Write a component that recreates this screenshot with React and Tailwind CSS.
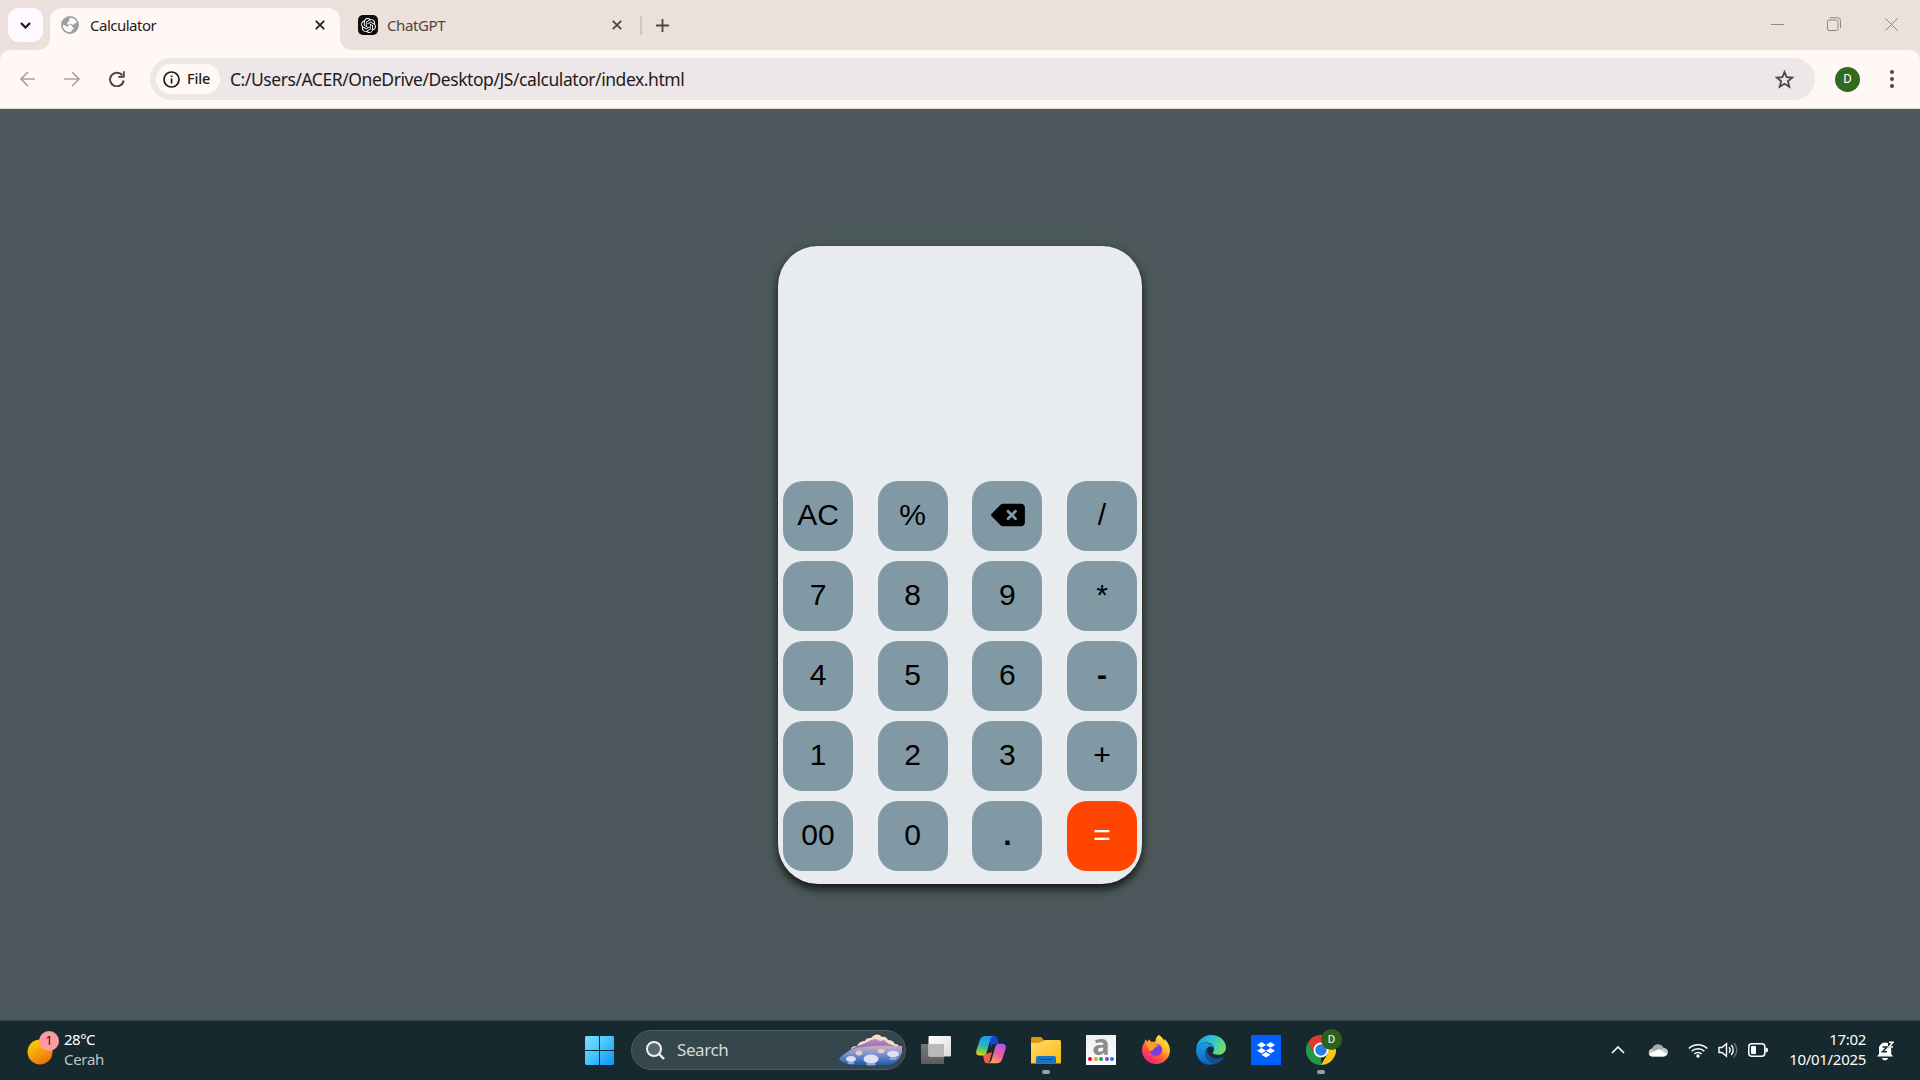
import React from "react";
import { FaDeleteLeft } from "react-icons/fa6";
import { SiOpenai } from "react-icons/si";

const KEYS = ["AC", "%", "DEL", "/", "7", "8", "9", "*", "4", "5", "6", "-", "1", "2", "3", "+", "00", "0", ".", "="];

function Globe() {
  return (
    <svg className="h-[18px] w-[18px]" viewBox="0 0 18 18">
      <circle cx="9" cy="9" r="9" fill="#9aa0a6" />
      <path d="M9.500 1.800c3 .2 5.200 1.800 6.200 4.200-.3 1-1.200.9-2 1.800-.8.8-1.200 1.200-2.400.8-1.100-.3-1-1.300-2.200-1.200-.9.1-1 .8-.4 1.300.5.300 1.300 0 1.800.500.5.600.3 1.400 1.100 1.900.7.500 1.300.700 1 1.700-.3.900-1.400.8-1.900 1.600-.4.7-.3 1.400-1.100 1.900C5 16.300 1.700 13.200 1.700 8.800c1.700.9 3 .4 4.300 1.500.8.7 1.800.2 1.800-.8 0-.7-1-.7-1.500-1.300-.7-1 .2-2 1.200-2.400.8-.4.700-1 .6-1.700-.1-1 .5-1.800 1.400-2.300z" fill="#fff8f5" />
    </svg>
  );
}

function Cross({ className }) {
  return (
    <svg className={className} viewBox="0 0 10 10" fill="none" stroke="currentColor" strokeWidth="1.8">
      <path d="M.8.8l8.400 8.400M9.200.8L.8 9.200" />
    </svg>
  );
}

function Browser() {
  return (
    <header className="h-[109px] bg-[#ebe0db]">
      <div className="flex h-[50px] items-end">
        <button className="mb-2 ml-2 flex h-[34px] w-[35px] items-center justify-center rounded-[11px] bg-[#fefaff]">
          <svg className="h-[7px] w-[11px]" viewBox="0 0 11 7" fill="none" stroke="#1d1b1a" strokeWidth="2.200"><path d="M1 1l4.500 4.500L10 1" /></svg>
        </button>
        <svg className="-ml-[5px] h-3 w-3" viewBox="0 0 12 12"><path d="M12 0v12H0A12 12 0 0 0 12 0z" fill="#fff8f5" /></svg>
        <div className="flex h-[42px] w-[290px] items-center rounded-t-[12px] bg-[#fff8f5] pl-[11px] pr-[15px]">
          <div className="-mt-[8px]"><Globe /></div>
          <span className="-mt-[7px] ml-[11px] flex-1 text-[15px] tracking-[-0.5px] text-[#1f1b1a]">Calculator</span>
          <Cross className="-mt-[8px] h-[10px] w-[10px] text-[#1f1b1a]" />
        </div>
        <svg className="h-3 w-3" viewBox="0 0 12 12"><path d="M0 0v12h12A12 12 0 0 1 0 0z" fill="#fff8f5" /></svg>
        <div className="mb-[7px] ml-[6px] flex h-9 w-[284px] items-center">
          <div className="flex h-5 w-5 items-center justify-center rounded-[5px] bg-[#0d0d0d]">
            <SiOpenai className="h-[15px] w-[15px] text-white" />
          </div>
          <span className="ml-[9px] flex-1 text-[15px] tracking-[-0.4px] text-[#51443e]">ChatGPT</span>
          <Cross className="mr-[18px] h-[10px] w-[10px] text-[#51443e]" />
          <i className="h-[19px] w-[2px] bg-[#d0c5c0]" />
        </div>
        <svg className="mb-[18px] ml-[14px] h-[13px] w-[13px]" viewBox="0 0 13 13" stroke="#51443e" strokeWidth="1.800"><path d="M6.500 0v13M0 6.500h13" /></svg>
        <div className="mb-[19px] ml-auto flex items-center text-[#8f8782]">
          <svg className="mr-[43px] h-[13px] w-[13px]" viewBox="0 0 13 13" stroke="currentColor"><path d="M0 6.500h13" /></svg>
          <svg className="mr-[44px] h-[14px] w-[14px]" viewBox="0 0 14 14" fill="none" stroke="currentColor"><rect x=".5" y="3" width="10.500" height="10.500" rx="1.500" /><path d="M3 .7h7.500a3 3 0 0 1 3 3V11" /></svg>
          <svg className="mr-[22px] h-[13px] w-[13px]" viewBox="0 0 13 13" stroke="currentColor"><path d="M.3.3l12.400 12.400M12.700.3L.3 12.700" /></svg>
        </div>
      </div>
      <div className="flex h-[59px] items-center rounded-t-[10px] border-b border-[#e5dbd6] bg-[#fff8f5]">
        <svg className="ml-5 h-4 w-[16px]" viewBox="0 0 16 16" fill="none" stroke="#aaa29e" strokeWidth="1.700"><path d="M15 8H1.500M8 1L1 8l7 7" /></svg>
        <svg className="ml-[28px] h-4 w-[16px]" viewBox="0 0 16 16" fill="none" stroke="#aaa29e" strokeWidth="1.700"><path d="M0 8h14.500M8 1l7 7-7 7" /></svg>
        <svg className="ml-[29px] h-4 w-4" viewBox="0 0 16 16"><path d="M13.300 4.500A6.800 6.800 0 1 0 14.600 9.500" fill="none" stroke="#51443e" strokeWidth="2" /><path d="M15.700.3v6.500H9.200V5h4.700V.3z" fill="#51443e" /></svg>
        <div className="ml-[25px] flex h-[42px] w-[1665px] items-center rounded-full bg-[#ede7e9] pl-[6px] pr-[21px]">
          <div className="flex h-[30px] w-16 items-center rounded-full bg-[#fff8f5] pl-[7px]">
            <svg className="h-[17px] w-[17px]" viewBox="0 0 17 17"><circle cx="8.500" cy="8.500" r="7.500" fill="none" stroke="#1f1b1a" strokeWidth="1.700" /><path d="M7.700 7.400h1.700v5H7.700zM7.700 4.400h1.700v1.700H7.700z" fill="#1f1b1a" /></svg>
            <span className="ml-[7px] text-[14.500px] font-medium tracking-[-0.2px] text-[#1f1b1a]">File</span>
          </div>
          <span className="ml-[10px] mt-px flex-1 text-[17.500px] tracking-[-0.44px] text-[#1f1b1a]">C:/Users/ACER/OneDrive/Desktop/JS/calculator/index.html</span>
          <svg className="h-[19px] w-[19px]" viewBox="0 0 19 19" fill="none" stroke="#51443e" strokeWidth="1.800"><path d="M9.500 2l2.100 5.200 5.600.4-4.300 3.600 1.400 5.500-4.800-3-4.800 3 1.400-5.500L1.800 7.600l5.600-.4z" /></svg>
        </div>
        <div className="ml-5 flex h-[25px] w-[25px] items-center justify-center rounded-full bg-[#33691e] font-['Roboto',sans-serif] text-[13px] text-white">D</div>
        <div className="ml-[30px] flex flex-col gap-[3px]">
          <i className="h-1 w-1 rounded-full bg-[#51443e]" />
          <i className="h-1 w-1 rounded-full bg-[#51443e]" />
          <i className="h-1 w-1 rounded-full bg-[#51443e]" />
        </div>
      </div>
    </header>
  );
}

function keyClass(k) {
  if (k === "=") return "flex h-[70px] items-center justify-center rounded-[20px] bg-[#ff4500] pb-[3px] text-white";
  if (k === "-" || k === ".") return "flex h-[70px] items-center justify-center rounded-[20px] bg-[#8099a4] pb-[3px] font-bold text-black";
  return "flex h-[70px] items-center justify-center rounded-[20px] bg-[#8099a4] pb-[3px] text-black";
}

function Calculator() {
  return (
    <main className="flex h-[911px] justify-center bg-[#4d595d] pt-[137px]">
      <section className="h-[638px] w-[364px] rounded-[40px] bg-[#e8ecef] px-[5px] pt-[235px] shadow-[0_5px_10px_rgba(0,0,0,0.75),0_0_20px_rgba(74,86,76,1)]">
        <div className="grid grid-cols-[repeat(4,70px)] justify-between gap-y-[10px] font-['Liberation_Sans',Arial,sans-serif] text-[30px]">
          {KEYS.map((k) => (
            <button key={k} className={keyClass(k)}>
              {k === "DEL" ? <FaDeleteLeft className="ml-px h-[30px] w-[34px]" /> : k}
            </button>
          ))}
        </div>
      </section>
    </main>
  );
}

function SearchArt() {
  return (
    <svg className="h-8 w-[64px]" viewBox="0 0 64 32">
      <defs>
        <linearGradient id="sea" x1="0" y1="0" x2="0" y2="1"><stop offset="0" stopColor="#d9a9b8" /><stop offset=".35" stopColor="#8a9bd0" /><stop offset="1" stopColor="#1d5ba8" /></linearGradient>
        <linearGradient id="hill" x1="0" y1="0" x2="0" y2="1"><stop offset="0" stopColor="#b98fc4" /><stop offset="1" stopColor="#7d5da5" /></linearGradient>
      </defs>
      <path d="M12 15c1-3 4-3 6-3 2-4 5-5 8-5 1-3 4-3 6-3 3-4 8-5 11-1 3-1 5 1 6 3 4 0 6 2 7 4 3 0 5 2 6 5z" fill="#f3dccb" />
      <path d="M9 17l9-5 6-2 8-4 5-1 4 2 4-1 5 4 6 2 6 4 2 3z" fill="url(#hill)" />
      <path d="M0 25C5 19 13 14 24 13c14-2 28-1 39-1v6c-2 7-6 11-12 13H12C7 30 2 28 0 25z" fill="url(#sea)" />
      <g fill="#dce2f4">
        <ellipse cx="12" cy="25" rx="5" ry="3" /><ellipse cx="32" cy="25" rx="7.500" ry="4.500" /><ellipse cx="54" cy="20" rx="6" ry="3.200" />
      </g>
      <g fill="#9bb5df" opacity=".85"><ellipse cx="12" cy="29" rx="3.500" ry="1.200" /><ellipse cx="32" cy="30.300" rx="5" ry="1.300" /><ellipse cx="54" cy="24.500" rx="4" ry="1.300" /></g>
      <g fill="#e6c8cf"><ellipse cx="20" cy="19" rx="3.500" ry="2.500" /><ellipse cx="42" cy="17" rx="3.500" ry="2.200" /></g>
    </svg>
  );
}

function Windows() {
  return (
    <svg className="h-[29px] w-[29px]" viewBox="0 0 29 29">
      <defs><linearGradient id="win" x1="0" y1="0" x2="1" y2="1"><stop offset="0" stopColor="#7fddff" /><stop offset=".5" stopColor="#42c3fb" /><stop offset="1" stopColor="#0a92f5" /></linearGradient></defs>
      <path d="M1 0h13v14H0V1zM15 0h13l1 1v13H15zM0 15h14v14H1l-1-1zM15 15h14v13l-1 1H15z" fill="url(#win)" />
    </svg>
  );
}

function TaskView() {
  return (
    <svg className="h-[30px] w-[30px]" viewBox="0 0 30 30">
      <defs>
        <linearGradient id="tvf" x1="0" y1="0" x2="1" y2="1"><stop offset="0" stopColor="#fff" /><stop offset="1" stopColor="#dcdcdc" /></linearGradient>
        <linearGradient id="tvb" x1="0" y1="0" x2="0" y2="1"><stop offset="0" stopColor="#767676" /><stop offset="1" stopColor="#5c5c5c" /></linearGradient>
      </defs>
      <rect y="9" width="23" height="20" rx="1" fill="url(#tvb)" />
      <rect x="7.500" y="1" width="22.500" height="20.500" rx="1" fill="url(#tvf)" />
      <path d="M7.500 9H23v12.500H8.500l-1-1z" fill="#b9b9b9" />
    </svg>
  );
}

function Copilot() {
  return (
    <svg className="h-[30px] w-[30px]" viewBox="0 0 30 30">
      <defs>
        <linearGradient id="cpa" x1=".5" y1="0" x2=".2" y2="1"><stop offset="0" stopColor="#1a9cf0" /><stop offset=".45" stopColor="#24b4c4" /><stop offset=".75" stopColor="#7ccb50" /><stop offset="1" stopColor="#f0cf1c" /></linearGradient>
        <linearGradient id="cpb" x1=".7" y1="0" x2=".3" y2="1"><stop offset="0" stopColor="#a65cf5" /><stop offset=".5" stopColor="#ee5b9c" /><stop offset="1" stopColor="#ffa35e" /></linearGradient>
      </defs>
      <path d="M13 1h5.500c2 0 2.700 1.500 3.200 3.500L22.800 9h-4c-2 0-3 1-3.800 3.500z" fill="#1746cf" />
      <path d="M7 20l9-3-2.500 9.500c-.4 1.100-.6 1.800-2 1.800-2.300 0-3-1.300-3.500-3.300z" fill="#f0603f" />
      <path d="M9.500 1h8c-2 .5-2.600 2-3.200 4l-3.500 12c-.7 2.300-1.500 3.500-4 3.500H3.500C.8 20.500-.3 18.500.4 15.500L3.800 5C4.800 2.200 6.500 1 9.500 1z" fill="url(#cpa)" />
      <path d="M20.500 28.300h-8c2-.5 2.600-2 3.200-4l3.500-12c.7-2.300 1.500-3.500 4-3.500h3.300c2.700 0 3.800 2 3.100 5l-3.400 10.500c-1 2.800-2.700 4-5.700 4z" fill="url(#cpb)" />
    </svg>
  );
}

function Explorer() {
  return (
    <svg className="h-[30px] w-[30px]" viewBox="0 0 30 30">
      <defs><linearGradient id="fol" x1="0" y1="0" x2="1" y2="1"><stop offset="0" stopColor="#ffdc69" /><stop offset="1" stopColor="#fdb813" /></linearGradient></defs>
      <path d="M0 3.500C0 2.500.7 2 1.500 2H9c1 0 1.500.3 2 1l1.500 2V10H0z" fill="#dd9a06" />
      <path d="M0 8c5-.2 8 .5 11-1.500L13.500 5H28c1.400 0 2 .6 2 2v21.500H0z" fill="url(#fol)" />
      <path d="M5 28.500V23c0-1.300.8-2 2-2h16c1.300 0 2 .7 2 2v5.500z" fill="#1576c9" />
      <path d="M8.500 24.500h13" stroke="#0a4a8f" />
    </svg>
  );
}

function AmazonTile() {
  return (
    <div className="flex h-[30px] w-[30px] flex-col items-center bg-linear-to-b from-[#f0f0f0] to-white">
      <span className="-mt-[1px] h-[22px] font-['Open_Sans','Noto_Sans',sans-serif] text-[29px] font-bold leading-[20px] text-[#8c8c8c]">a</span>
      <div className="mt-[1px] flex gap-[1.500px]">
        <i className="h-1 w-1 rounded-full bg-[#f00018]" /><i className="h-1 w-1 rounded-full bg-[#f59a10]" /><i className="h-1 w-1 rounded-full bg-[#12a35a]" /><i className="h-1 w-1 rounded-full bg-[#9533d8]" /><i className="h-1 w-1 rounded-full bg-[#0c80e8]" />
      </div>
    </div>
  );
}

function Firefox() {
  return (
    <svg className="h-[30px] w-[30px]" viewBox="0 0 30 30">
      <defs>
        <linearGradient id="ffx" x1=".85" y1=".05" x2=".2" y2=".95"><stop offset="0" stopColor="#fff150" /><stop offset=".35" stopColor="#ffb52b" /><stop offset=".65" stopColor="#ff5a35" /><stop offset="1" stopColor="#ee168c" /></linearGradient>
        <radialGradient id="ffp"><stop offset="0" stopColor="#5b4be8" /><stop offset="1" stopColor="#9833d8" /></radialGradient>
      </defs>
      <path d="M18 0c2.500 1.500 4.200 3.600 5 6 .4-.8.500-1.500.4-2.300C26.500 6.500 29 11 29 15.500 29 23 22.700 29 15 29S1 23 1 15.500c0-3.500 1-6 2.500-8.200L4.200 4.500C5.200 5 6 5.800 6.300 6.500L8.500 4.200c.3 1 .8 1.900 1.700 2.600h4.300C14.300 4 15.500 1.500 18 0z" fill="url(#ffx)" />
      <circle cx="15" cy="15" r="6.200" fill="url(#ffp)" />
      <path d="M5 8c3-1.700 6-1 8.500.7 1.300.8 3 .5 3.500 1.300-.7 2-3 2-4 3.200-.5.8-.2 2-1.800 2.400-1.200.2-2.400-.3-2.700.5C7.500 13 5 12 5 8z" fill="#ff9a22" />
    </svg>
  );
}

function Edge() {
  return (
    <svg className="h-[30px] w-[30px]" viewBox="0 0 30 30">
      <defs>
        <linearGradient id="edt" x1="0" y1=".3" x2="1" y2=".6"><stop offset="0" stopColor="#1e9de0" /><stop offset=".5" stopColor="#31c4d4" /><stop offset="1" stopColor="#6fe25c" /></linearGradient>
        <linearGradient id="edb" x1="0" y1="0" x2="0" y2="1"><stop offset="0" stopColor="#1b9ce4" /><stop offset="1" stopColor="#0b62bd" /></linearGradient>
      </defs>
      <path d="M.2 13C1.300 5.500 7.500 0 15 0c9 0 15 6 15 12.500 0 4.500-3.500 7.300-7.500 7.300-3.500 0-5.800-1-5.800-2 0-.7 1.300-1.500 1.300-4C18 10 14 7.500 10 7.500 5.500 7.500 2 9.500.2 13z" fill="url(#edt)" />
      <path d="M0 15C.3 10.500 4.500 8 9.300 8 14 8 18 10.500 18 13.500c-.8-1.400-2-2-3.500-2-3 0-5 3-5 6.500 0 6 4.500 9.500 9 11C8 32 0 25 0 15z" fill="url(#edb)" />
      <path d="M11.500 13c-4 5.500-1 13.500 6.500 16.300 4-.8 7.500-3.300 9.700-6.500.3-.6-.2-1-.8-.7-6 3-13.400.5-15.400-4.600-.5-1.500-.5-3 0-4.500z" fill="#114e94" />
    </svg>
  );
}

function Dropbox() {
  return (
    <div className="flex h-[30px] w-[30px] items-center justify-center bg-[#0061fe]">
      <svg className="h-4 w-[18px]" viewBox="0 0 18 16" fill="#fff"><path d="M4.500 0L9 2.900 4.500 5.700 0 2.900zM13.500 0L18 2.900l-4.500 2.800L9 2.900zM4.500 5.900L9 8.700l-4.500 2.900L0 8.700zM13.500 5.900L18 8.700l-4.500 2.900L9 8.700zM9 9.900l4.500 2.800L9 15.600l-4.500-2.900z" /></svg>
    </div>
  );
}

function Chrome() {
  return (
    <div className="relative h-[30px] w-[30px]">
      <svg className="h-[30px] w-[30px]" viewBox="0 0 30 30">
        <path d="M2 7.500L8.600 18.700 15 22.500l.5 7.500A15 15 0 0 1 2 7.500z" fill="#249a48" />
        <path d="M28 7.500A15 15 0 0 1 15 30l6.500-11.300L22 11 15 7.500z" fill="#fcc31b" />
        <path d="M2 7.500A15 15 0 0 1 28 7.500H15L8.600 18.700z" fill="#e33b2e" />
        <circle cx="15" cy="15" r="7.500" fill="#fff" /><circle cx="15" cy="15" r="5.700" fill="#287be8" />
      </svg>
      <span className="absolute -top-[6px] left-[15px] flex h-[21px] w-[21px] items-center justify-center rounded-full bg-[#2d601b] font-['Roboto',sans-serif] text-[11.500px] font-medium text-[#d5e0d0]">D</span>
    </div>
  );
}

function Slot({ running, children }) {
  return (
    <div className="relative h-[30px] w-[30px]">
      {children}
      {running && <i className="absolute left-[11px] top-[35px] h-1 w-2 rounded-full bg-[#98a2a5]" />}
    </div>
  );
}

function Taskbar() {
  return (
    <footer className="flex h-[60px] items-center border-t border-[#38484d] bg-[#15292f] pb-px text-white">
      <div className="flex w-[558px] items-center pl-[27px] pb-[5px]">
        <div className="relative h-[34px] w-[32px]">
          <svg className="h-[34px] w-[32px]" viewBox="0 0 32 34">
            <defs><linearGradient id="sun" x1=".2" y1="0" x2=".8" y2="1"><stop offset="0" stopColor="#ffd00a" /><stop offset="1" stopColor="#e96c08" /></linearGradient></defs>
            <circle cx="13" cy="21" r="12.500" fill="url(#sun)" />
          </svg>
          <span className="absolute left-[12px] top-0 flex h-5 w-5 items-center justify-center rounded-full bg-[#ff99a4] text-[13px] text-[#1a1a1a]">1</span>
        </div>
        <div className="ml-[5px] mt-[2px] text-[15px] leading-[20px] tracking-[-0.5px]">
          <p>28°C</p>
          <p className="tracking-[-0.3px] text-[#bfc7c9]">Cerah</p>
        </div>
      </div>
      <div className="ml-[27px]"><Windows /></div>
      <div className="ml-[17px] flex h-10 w-[275px] items-center rounded-full border border-[#4d5d61] bg-[#35474c] pl-[14px] pr-[2px]">
        <svg className="h-[19px] w-[19px]" viewBox="0 0 19 19" fill="none" stroke="#f0f2f2" strokeWidth="2"><circle cx="8" cy="8" r="7" fill="#57676b" /><path d="M13 13l5 5" strokeWidth="2.400" /></svg>
        <span className="ml-3 flex-1 text-[17px] tracking-[-0.4px] text-[#d6dadb]">Search</span>
        <SearchArt />
      </div>
      <div className="ml-[15px] flex gap-[25px]">
        <Slot><TaskView /></Slot>
        <Slot><Copilot /></Slot>
        <Slot running><Explorer /></Slot>
        <Slot><AmazonTile /></Slot>
        <Slot><Firefox /></Slot>
        <Slot><Edge /></Slot>
        <Slot><Dropbox /></Slot>
        <Slot running><Chrome /></Slot>
      </div>
      <div className="ml-auto mr-[26px] flex items-center">
        <svg className="h-2 w-[14px]" viewBox="0 0 14 8" fill="none" stroke="#fff" strokeWidth="1.700"><path d="M1 7l6-6 6 6" /></svg>
        <svg className="ml-[23px] h-[13px] w-5" viewBox="0 0 20 13"><path d="M4 12.500a4 4 0 0 1 .3-7.900A6 6 0 0 1 15.500 4a4.200 4.200 0 0 1 .5 8.500z" fill="#c4c9ca" /><path d="M4.300 4.600A6 6 0 0 1 15.500 4L7 8.500z" fill="#a5adaf" /><path d="M1 10l7-3.500 3-1.500 8 5c-.7 1.500-1.800 2.500-3.500 2.500H4C2.500 12.500 1.500 11.500 1 10z" fill="#fff" /></svg>
        <svg className="ml-5 h-[15px] w-5" viewBox="0 0 20 15" fill="none" stroke="#fff" strokeWidth="1.500"><path d="M.8 5.500a13 13 0 0 1 18.400 0M3.600 8.300a9 9 0 0 1 12.800 0M6.300 11a5.200 5.200 0 0 1 7.400 0" /><circle cx="10" cy="13" r="1.700" fill="#fff" stroke="none" /></svg>
        <svg className="ml-[10px] h-[18px] w-5" viewBox="0 0 20 18" fill="none" stroke="#fff" strokeWidth="1.400"><path d="M1 6.500h3L8.500 2.700v12.600L4 11.500H1z" /><path d="M11 6.200c1.300 1.600 1.300 4 0 5.600M13.300 4c2.500 2.800 2.500 7.200 0 10" /><path d="M15.800 1.800c4 4.200 4 10.200 0 14.400" opacity=".35" /></svg>
        <svg className="ml-[10px] h-[14px] w-5" viewBox="0 0 20 14"><rect x=".8" y=".8" width="16" height="12.400" rx="3" fill="none" stroke="#fff" strokeWidth="1.500" /><rect x="3" y="3" width="5" height="8" rx="1" fill="#fff" /><path d="M17.500 4.500c1.500 0 2.500.8 2.500 2.500s-1 2.500-2.500 2.500z" fill="#fff" /></svg>
        <div className="mb-[3px] w-[98px] text-right text-[15px] leading-5 tracking-[-0.3px]">
          <p>17:02</p>
          <p>10/01/2025</p>
        </div>
        <svg className="ml-[11px] mt-px h-[20px] w-[17px]" viewBox="0 0 17 20"><path d="M2 13V8a6 6 0 0 1 6-6.500c4 0 6.200 3 6.200 6.500v5l1.800 2.500H0z" fill="#fff" /><path d="M5 17h6c-.3 1.600-1.500 2.300-3 2.300S5.300 18.600 5 17z" fill="#fff" /><path d="M11 0h6v7h-6z" fill="#15292f" /><path d="M5.500 6h4.500L5.500 10.800h4.500" stroke="#15292f" strokeWidth="1.500" fill="none" /><path d="M12 1.200h4L12 6h4" stroke="#fff" strokeWidth="1.500" fill="none" /></svg>
      </div>
    </footer>
  );
}

export default function App() {
  return (
    <div className="h-[1080px] w-[1920px] overflow-hidden font-['Noto_Sans','Open_Sans',sans-serif]">
      <Browser />
      <Calculator />
      <Taskbar />
    </div>
  );
}
